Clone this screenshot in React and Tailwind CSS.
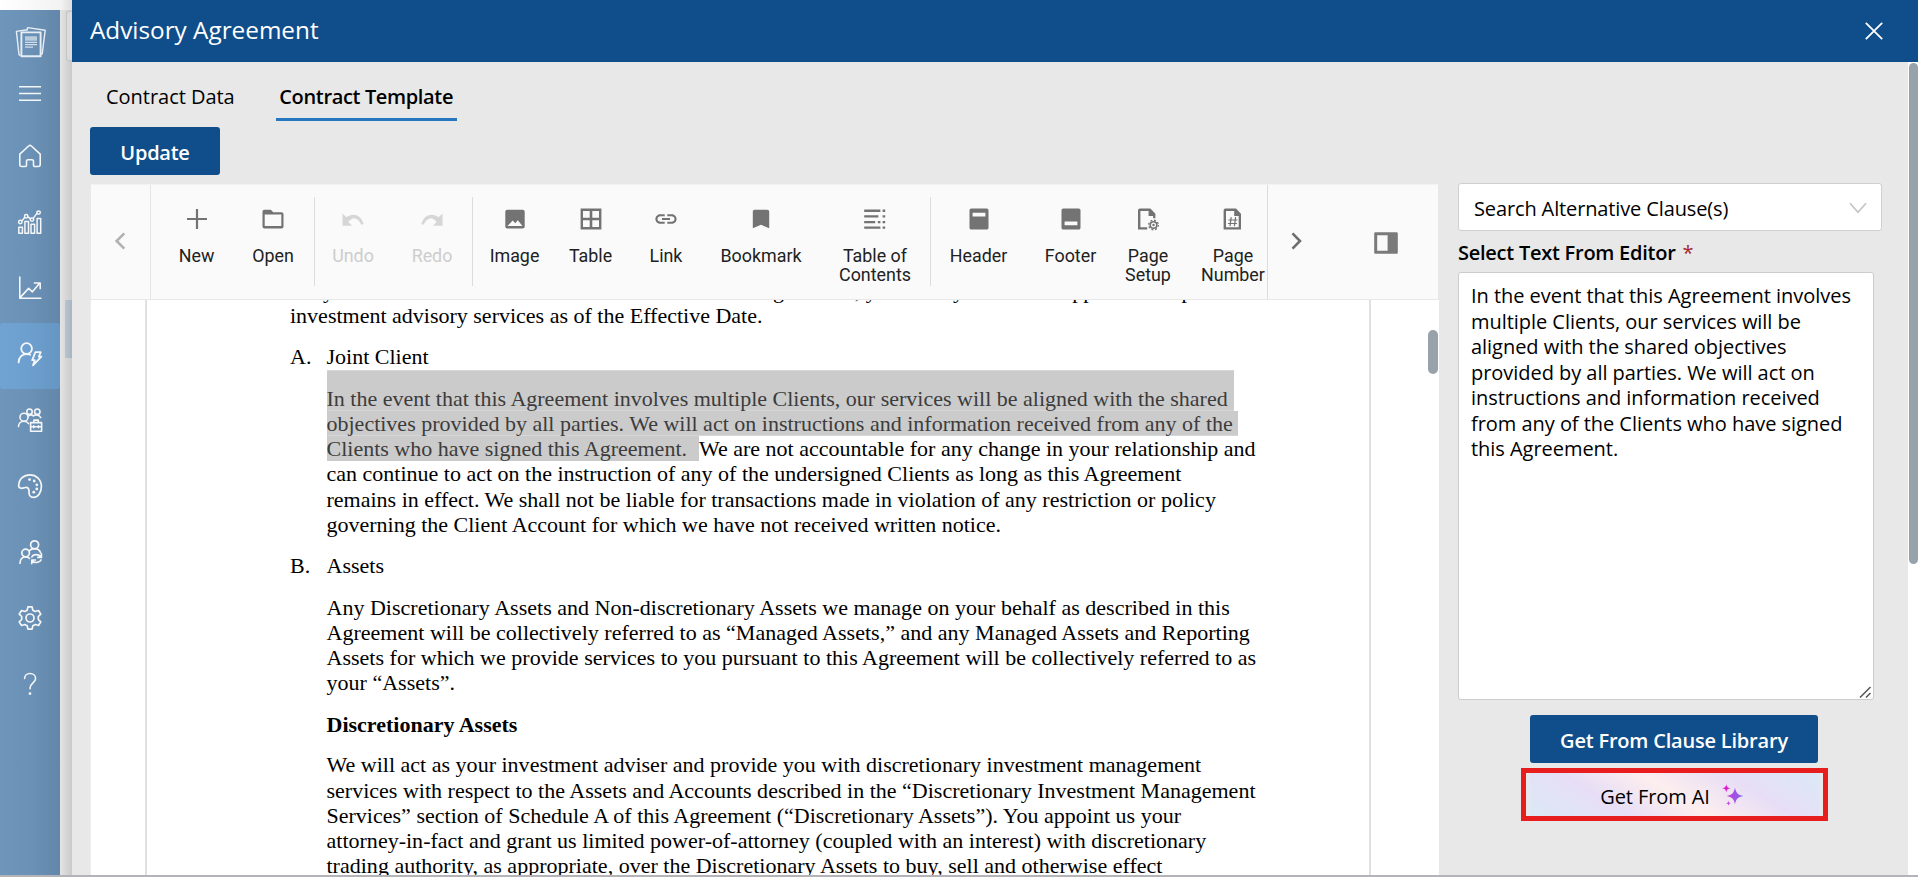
import React from "react";

const NavSvg = ({ children, w = 1.6 }) => (
  <svg width="26" height="26" viewBox="0 0 26 26" fill="none" stroke="#f4f6f8" strokeWidth={w} strokeLinejoin="round" strokeLinecap="round">
    {children}
  </svg>
);

const navItems = [
  {
    name: "home",
    icon: (
      <NavSvg>
        <path d="M2.8 11.2 11.6 3c.8-.7 2-.7 2.8 0l8.800 8.200v10.300a2 2 0 0 1-2 2h-3.400a1.300 1.300 0 0 1-1.300-1.300v-4a1.500 1.500 0 0 0-1.500-1.500h-4a1.500 1.500 0 0 0-1.500 1.500v4a1.300 1.300 0 0 1-1.300 1.300H4.800a2 2 0 0 1-2-2z" />
      </NavSvg>
    ),
  },
  {
    name: "analytics",
    icon: (
      <NavSvg w={1.5}>
        <path d="M1.8 18.200h3.600v6H1.800zM7.900 12.400h3.600v11.800H7.900zM14 15.200h3.600v9H14zM20.100 9.600h3.600v14.600h-3.600zM5 11.800l2.500-3M11 7.800l2.200 1.800M16.400 9.100l3.500-4.700" />
        <circle cx="3.300" cy="13" r="1.700" /><circle cx="9.200" cy="7.200" r="1.700" /><circle cx="15" cy="10.600" r="1.700" /><circle cx="21.600" cy="3.600" r="1.700" />
      </NavSvg>
    ),
  },
  {
    name: "trend",
    icon: (
      <NavSvg>
        <path d="M2.800 2v21.300h21M4 21.600l7.600-8.200 3.800 3.400 7-8.400M17.400 8h5.800v5.600" />
      </NavSvg>
    ),
  },
  {
    name: "users",
    active: true,
    icon: (
      <NavSvg w={1.8}>
        <circle cx="9.600" cy="7.600" r="5.400" />
        <path d="M1.600 21.400c0-4.700 3.300-8.400 8-8.400 1.400 0 2.500.2 3.600.8" />
        <path d="M18.400 11.200h5.400l-2 4.400h2.600l-8.400 8.800 1.800-5.200h-2.600z" />
      </NavSvg>
    ),
  },
  {
    name: "organization",
    icon: (
      <NavSvg w={1.6}>
        <circle cx="12.500" cy="4.700" r="2.700" /><circle cx="20.300" cy="4.700" r="2.700" /><circle cx="7" cy="10.200" r="4" />
        <path d="M1.500 19.600c0-3.200 2.300-5.400 5.500-5.400 2 0 3.600.9 4.600 2.400M11.500 9c1.600-1.400 3.500-1.400 4.900 0 1.900-1.600 5.700-1.600 7.400 1.600" />
        <path d="M13.600 15.600h11v8.600h-11zM16.900 15.400v-2.300h4.400v2.300M13.600 19.800h11M16.800 18.800v2M21.500 18.800v2" />
      </NavSvg>
    ),
  },
  {
    name: "palette",
    icon: (
      <NavSvg w={1.7}>
        <path d="M1.800 12.600C1.800 6 6.800 1.800 13 1.800S24.400 6.600 24.400 13.200 20.800 24.400 16.700 24.400s-4.900-2.900-4.700-5.600c.2-3-1-4.700-3.700-4.300-1.300.2-2.200.8-3.500.8-1.800 0-3.200-.9-3.200-2.700z" />
        <g fill="#f4f6f8" stroke="none"><circle cx="12.600" cy="6.600" r="1.400" /><circle cx="17.200" cy="8" r="1.400" /><circle cx="19.800" cy="11.800" r="1.400" /><circle cx="19.800" cy="16" r="1.400" /><circle cx="16.800" cy="19.200" r="1.400" /></g>
      </NavSvg>
    ),
  },
  {
    name: "client-sync",
    icon: (
      <NavSvg w={1.7}>
        <circle cx="17.600" cy="5.800" r="4" /><circle cx="8.600" cy="14" r="3.800" />
        <path d="M3 24.200c0-3.800 2.300-6.400 5.600-6.400 1.500 0 2.900.5 3.900 1.500M12.400 11.600c1.300-1.300 3.100-1.900 5.200-1.900 2.900 0 5 1.500 6 4" />
        <path d="M14.800 17.800c1.200-2.500 6.400-3.200 8.800-.4M24.400 14.800v3.600h-3.600M24 21c-1.200 2.700-6.400 3.600-8.800.6M14.800 24.600V21h3.600" />
      </NavSvg>
    ),
  },
  {
    name: "settings",
    icon: (
      <NavSvg w={1.7}>
        <circle cx="13" cy="13" r="4" />
        <path d="M10.900 1.900h4.200l.7 3.300 2.400 1.300 3.300-1 2.300 3.600-2.500 2.400v3l2.500 2.400-2.300 3.600-3.300-1-2.400 1.300-.7 3.300h-4.200l-.7-3.300-2.400-1.300-3.300 1-2.300-3.600 2.500-2.400v-3L2.200 9.100l2.300-3.600 3.300 1 2.400-1.300z" />
      </NavSvg>
    ),
  },
  {
    name: "help",
    icon: (
      <NavSvg w={1.600}>
        <path d="M7.600 7.500C7.600 4.500 10 2.500 13 2.500s5.600 2 5.600 5c0 4-5.500 4.700-5.500 9.300v1" />
        <circle cx="13" cy="22.600" r=".6" fill="#f4f6f8" />
      </NavSvg>
    ),
  },
];

function Sidebar() {
  return (
    <nav className="mt-[10px] flex w-[60px] shrink-0 flex-col items-center bg-linear-to-r from-[#6e95ba] via-[#6b91b6] to-[#6287aa]">
      <div className="flex h-[66px] items-center justify-center pl-[2px]">
        <svg width="32" height="34" viewBox="0 0 32 34" fill="none" stroke="#e6edf4" strokeWidth="1.400" strokeLinejoin="round">
          <path d="M5.600 29.600 4 28.600 1.400 5.400l10.800-1.600M11.800 4.800 12.600 1.600l17.600 2.600-3 23.600-2 .4" />
          <path d="M6.400 6.400h19.200v23.800H6.400z" strokeWidth="1.900" />
          <path d="M10 11.400h12M10 13.700h12" strokeWidth="2.300" stroke="#b9cddf" />
          <path d="M10 16.400h12M10 18.700h12M10 21.200h8" strokeWidth="1.200" stroke="#d2deea" />
        </svg>
      </div>
      <div className="flex h-[35px] items-center">
        <svg width="22" height="17" viewBox="0 0 22 17" fill="#f4f6f8">
          <path d="M0 1h22v1.500H0zM0 7.800h22v1.500H0zM0 14.500h22V16H0z" />
        </svg>
      </div>
      <div className="mt-[14px] flex w-full flex-col">
        {navItems.map((n) => (
          <div
            key={n.name}
            className={
              n.active
                ? "flex h-[66px] items-center justify-center rounded-[3px] bg-linear-to-r from-[#70a3d3] via-[#6d9fce] to-[#6696c2] pb-[4px]"
                : "flex h-[66px] items-center justify-center pb-[4px]"
            }
          >
            {n.icon}
          </div>
        ))}
      </div>
    </nav>
  );
}

const Ico = ({ children, dim }) => (
  <svg width="24" height="24" viewBox="0 0 24 24" fill={dim ? "#d6d6d6" : "#737373"} fillRule="evenodd" className="shrink-0">
    {children}
  </svg>
);

const pageOutline = "M4.500 1.500h10.500l5 5.200v15.800H2.600V3.400c0-1 .8-1.900 1.900-1.900zM5 4v16.200h12.700V9h-4.500V4z";

const tools = [
  { cell: "w-[77px]", label: "New", icon: <Ico><path d="M10.900 2h2.200v8.900H22v2.200h-8.900V22h-2.200v-8.900H2v-2.200h8.900z" /></Ico> },
  { cell: "w-[79px] pr-[3px]", label: "Open", icon: <Ico><path d="M3.400 2.700h6.400l2.500 2.500h8.200c1.200 0 2 .9 2 2v12.200c0 1.100-.8 2-2 2h-17c-1.200 0-2-.9-2-2V4.700c0-1.100.8-2 1.900-2zM3.700 7.500v11.600h16.600V7.500z" /></Ico> },
  { sep: true },
  { cell: "w-[78px]", label: "Undo", dim: true, icon: <Ico dim><path d="M12.500 7.200c-2.700 0-5.100 1-7 2.600L1.500 6v12.200h9.600l-3.800-3.800c1.400-1.200 3.200-3.700 5.200-3.700 3.600 0 6.700 3.200 7.700 6.600l2.400-.8C21 10.800 17.300 7.200 12.500 7.200z" transform="translate(0 .5)" /></Ico> },
  { cell: "w-[80px]", label: "Redo", dim: true, icon: <Ico dim><path d="M11.500 7.200c2.700 0 5.100 1 7 2.600L22.500 6v12.200h-9.600l3.800-3.800c-1.400-1.200-3.200-3.700-5.200-3.700-3.600 0-6.700 3.200-7.700 6.600l-2.400-.8C3 10.800 6.700 7.200 11.500 7.200z" transform="translate(0 .5)" /></Ico> },
  { sep: true },
  { cell: "w-[85px]", label: "Image", icon: <Ico><path d="M4.300 2.700h15.400c1.100 0 2 .9 2 2v14.800c0 1.100-.9 2-2 2H4.300c-1.100 0-2-.9-2-2V4.700c0-1.100.9-2 2-2zM4.500 19h15l-4.700-5.800-2.500 3-2.600-2.700z" /></Ico> },
  { cell: "w-[67px]", label: "Table", icon: <Ico><path d="M1.600 1.400h20.800v21.200H1.600zM4 3.900v6.800h6.700V3.900zM13.300 3.900v6.800H20V3.900zM4 13.300v6.800h6.700v-6.800zM13.300 13.300v6.800H20v-6.800z" /></Ico> },
  { cell: "w-[84px]", label: "Link", icon: <Ico><path d="M3.500 12c0-1.700 1.400-2.700 3-2.700h4.200V7.200H6.500C3.700 7.200 1.400 9.300 1.400 12s2.300 4.800 5.100 4.800h4.200v-2.100H6.500c-1.600 0-3-1-3-2.700zM8 13h8v-2.100H8zM17.500 7.200h-4.200v2.100h4.200c1.600 0 3 1 3 2.700s-1.400 2.700-3 2.700h-4.200v2.100h4.200c2.800 0 5.100-2.100 5.100-4.800s-2.300-4.800-5.100-4.800z" /></Ico> },
  { cell: "w-[106px]", label: "Bookmark", icon: <Ico><path d="M5.800 2.800h12.400c1.100 0 2 .8 2 1.800v16.600L12 17.700l-8.200 3.500V4.600c0-1 .9-1.800 2-1.800z" /></Ico> },
  { cell: "w-[116px] pl-[6px]", label: "Table of\nContents", icon: <Ico><path d="M1.200 2.600h16.200v2.300H1.200zM1.200 8.300h14.200v2.300H1.200zM1.200 14h11v2.300h-11zM1.200 19.400h16.200v2.300H1.200zM19.600 2.600h2.600v2.300h-2.600zM19.600 8.300h2.600v2.300h-2.600zM14.800 14h2.600v2.300h-2.600zM19.600 14h2.600v2.300h-2.600zM19.600 19.400h2.600v2.300h-2.600z" /></Ico> },
  { sep: true },
  { cell: "w-[95px] pl-[2px]", label: "Header", icon: <Ico><path d="M4.300 1.400h15.400c1 0 1.800.8 1.800 1.800v17.600c0 1-.8 1.800-1.800 1.800H4.300c-1 0-1.800-.8-1.800-1.800V3.200c0-1 .8-1.800 1.800-1.800zM5.600 5.700v3.700h12.800V5.700z" /></Ico> },
  { cell: "w-[91px]", label: "Footer", icon: <Ico><path d="M4.300 1.400h15.400c1 0 1.800.8 1.800 1.800v17.600c0 1-.8 1.800-1.800 1.800H4.300c-1 0-1.800-.8-1.800-1.800V3.200c0-1 .8-1.800 1.800-1.800zM5.600 14.600v3.700h12.800v-3.700z" /></Ico> },
  {
    cell: "w-[64px]",
    label: "Page\nSetup",
    icon: (
      <Ico>
        <path d="M3.900 1.500h10.500l5 5.200v4.600h-2.300V9h-4.500V4H4.400v16.300h6.800v2.200H2V3.400c0-1 .8-1.900 1.900-1.900z" />
        <circle cx="17.500" cy="18" r="3.300" fill="none" stroke="#737373" strokeWidth="1.600" />
        <circle cx="17.500" cy="18" r="1.200" />
        <circle cx="17.500" cy="18" r="4.800" fill="none" stroke="#737373" strokeWidth="1.300" strokeDasharray="1.900 1.870" />
      </Ico>
    ),
  },
  {
    cell: "w-[88px] pl-[18px]",
    label: "Page\nNumber",
    icon: (
      <Ico>
        <path d={pageOutline} />
        <path d="M10.200 10.200 9 19.200M14.600 10.200l-1.200 9M7.400 13h9M7 16.500h9" fill="none" stroke="#737373" strokeWidth="1.200" />
      </Ico>
    ),
  },
];

function Toolbar() {
  return (
    <div className="flex h-[116px] shrink-0 border border-[#e8e8e8] border-t-[#f2f2f2] bg-[#fafafa]">
      <div className="flex w-[60px] items-center justify-center border-r border-[#e5e5e5]">
        <svg width="12" height="18" viewBox="0 0 12 18" fill="none" stroke="#b2b2b2" strokeWidth="2.600" className="mr-px mb-[2px]"><path d="M10.300 1.300 2.600 9l7.700 7.700" /></svg>
      </div>
      <div className="flex w-[1116px] shrink-0 pl-[7px] font-[Roboto,sans-serif] text-[17.875px] leading-[19px]">
        {tools.map((t, i) =>
          t.sep ? (
            <div key={i} className="mx-[-0.5px] mt-[12px] h-[89px] w-px shrink-0 bg-[#dcdcdc]" />
          ) : (
            <div key={i} className={`${t.cell} flex shrink-0 flex-col items-center pt-[21.500px]`}>
              {t.icon}
              <div className={t.dim ? "mt-[15.500px] text-center whitespace-pre text-[#cdcdcd]" : "mt-[15.500px] text-center whitespace-pre text-[#212121]"}>{t.label}</div>
            </div>
          )
        )}
      </div>
      <div className="flex flex-1 items-center border-l border-[#dcdcdc]">
        <svg width="12" height="18" viewBox="0 0 12 18" fill="none" stroke="#6e6e6e" strokeWidth="2.600" className="mb-[2px] ml-[23px]"><path d="M1.500 1.300 9 9l-7.500 7.700" /></svg>
        <svg width="24" height="22" viewBox="0 0 24 22" fill="#7a7a7a" fillRule="evenodd" className="mt-[2px] ml-[71px]"><path d="M1.500.3h21c.8 0 1.300.6 1.300 1.300v18.800c0 .7-.5 1.300-1.300 1.300h-21C.7 21.700.2 21.100.2 20.400V1.600C.2.900.7.300 1.500.3zM3.200 3.300v15.400h10.400V3.300z" /></svg>
      </div>
    </div>
  );
}

const Item = ({ mark, children }) => (
  <div className="flex pt-[16px]">
    <span className="w-[36.500px]">{mark}</span>
    <span>{children}</span>
  </div>
);

const Lines = ({ rows }) => rows.map((r) => <div key={r}>{r}</div>);

function Document() {
  return (
    <div className="flex flex-1 overflow-hidden border-l border-[#ededed] bg-white">
      <div className="w-[54px] shrink-0" />
      <div className="w-[1226px] shrink-0 border-x-2 border-[#e0e0e0] pl-[143px] font-['Liberation_Serif',serif] text-[22px] leading-[25.3px] whitespace-nowrap text-black">
        <div className="mt-[-22.400px] flex">
          <span className="w-[467px]">Duly noted with the terms and conditions stated in this</span>
          <span>Agreement, you hereby retain and appoint us to provide</span>
        </div>
        <div>investment advisory services as of the Effective Date.</div>
        <Item mark="A.">Joint Client</Item>
        <div className="pl-[36.500px]">
          <div className="w-[907.500px] border-y border-[#d6d6d6] bg-[#cbcbcb] pt-[15px] text-[#3c3c3c]">
            <div className="h-[24.300px]">In the event that this Agreement involves multiple Clients, our services will be aligned with the shared</div>
          </div>
          <div className="h-[25.300px] w-[911.500px] border-b border-[#d6d6d6] bg-[#cbcbcb] text-[#3c3c3c]">objectives provided by all parties. We will act on instructions and information received from any of the</div>
          <div className="flex">
            <span className="w-[372.500px] bg-[#cbcbcb] text-[#3c3c3c]">Clients who have signed this Agreement.</span>
            <span>We are not accountable for any change in your relationship and</span>
          </div>
          <Lines
            rows={[
              "can continue to act on the instruction of any of the undersigned Clients as long as this Agreement",
              "remains in effect. We shall not be liable for transactions made in violation of any restriction or policy",
              "governing the Client Account for which we have not received written notice.",
            ]}
          />
        </div>
        <Item mark="B.">Assets</Item>
        <div className="pt-[16px] pl-[36.500px]">
          <div className="tracking-[0.015px]">
            <Lines
              rows={[
                "Any Discretionary Assets and Non-discretionary Assets we manage on your behalf as described in this",
                "Agreement will be collectively referred to as “Managed Assets,” and any Managed Assets and Reporting",
                "Assets for which we provide services to you pursuant to this Agreement will be collectively referred to as",
                "your “Assets”.",
              ]}
            />
          </div>
          <div className="pt-[16.500px] font-bold">Discretionary Assets</div>
          <div className="pt-[14.700px] tracking-[0.010px]">
            <Lines
              rows={[
                "We will act as your investment adviser and provide you with discretionary investment management",
                "services with respect to the Assets and Accounts described in the “Discretionary Investment Management",
                "Services” section of Schedule A of this Agreement (“Discretionary Assets”). You appoint us your",
                "attorney-in-fact and grant us limited power-of-attorney (coupled with an interest) with discretionary",
                "trading authority, as appropriate, over the Discretionary Assets to buy, sell and otherwise effect",
              ]}
            />
          </div>
        </div>
      </div>
      <div className="ml-auto w-[11px] pt-[30px]">
        <div className="h-[44px] w-[10px] rounded-full bg-[#98a2ab]" />
      </div>
    </div>
  );
}

function ClausePanel() {
  return (
    <aside className="mt-[-1px] ml-[19px] w-[424px] text-[20px] text-black">
      <div className="flex h-[48px] items-center justify-between rounded-[3px] border border-[#cfcfcf] bg-white pt-[3px] pr-[14px] pl-[15px] tracking-[-0.130px]">
        <span>Search Alternative Clause(s)</span>
        <svg width="18" height="12" viewBox="0 0 18 12" fill="none" stroke="#c4c4c4" strokeWidth="1.700" className="mb-[2px]"><path d="M1 1.200 9 10.200l8-9" /></svg>
      </div>
      <div className="mt-[9px] flex h-[26px] items-center gap-[7px] font-semibold tracking-[-0.250px]">
        <span>Select Text From Editor</span>
        <span className="font-normal text-[#a4262c]">*</span>
      </div>
      <div className="mt-[6px] flex h-[428px] w-[416px] flex-col rounded-[3px] border border-[#cccccc] bg-white pt-[10px] pl-[12px] leading-[25.500px] tracking-[-0.040px] whitespace-nowrap">
        <Lines
          rows={[
            "In the event that this Agreement involves",
            "multiple Clients, our services will be",
            "aligned with the shared objectives",
            "provided by all parties. We will act on",
            "instructions and information received",
            "from any of the Clients who have signed",
            "this Agreement.",
          ]}
        />
        <svg width="12" height="12" viewBox="0 0 12 12" stroke="#555" strokeWidth="1.500" className="mt-auto mr-[2px] mb-[1px] self-end"><path d="M1 11.500 11.500 1M7 11.500 11.500 7" /></svg>
      </div>
      <div className="mt-[15px] ml-[72px] flex h-[48px] w-[288px] items-center justify-center rounded-[3px] bg-[#0f4e8a] pt-[4px] font-semibold tracking-[-0.200px] text-white">Get From Clause Library</div>
      <div className="mt-[5px] ml-[63px] flex h-[53px] w-[307px] border-[5px] border-[#e81e1e] bg-[#e8e8e8] px-[4px]">
        <div className="flex flex-1 items-center justify-center gap-[12px] bg-[linear-gradient(32deg,#dbe9f6_0%,#e7def6_28%,#fdeeee_50%,#e7def6_74%,#dbe9f6_100%)] pt-[5px] pr-[5px] tracking-[-0.100px]">
          <span>Get From AI</span>
          <svg width="22" height="22" viewBox="0 0 22 22" className="mb-[5px]">
            <defs>
              <linearGradient id="spark" x1="0" y1="0" x2="1" y2="0"><stop offset="0" stopColor="#c637d8" /><stop offset="1" stopColor="#7a6cf0" /></linearGradient>
            </defs>
            <path d="M13 3.800c1.200 5.300 2.700 7 8.400 8.200-5.700 1.200-7.200 2.900-8.400 8.200-1.200-5.300-2.700-7-8.400-8.200 5.700-1.200 7.200-2.900 8.400-8.200z" fill="url(#spark)" />
            <path d="M4.300.2c.6 2.700 1.300 3.500 4.200 4.100-2.900.6-3.600 1.400-4.200 4.100C3.700 5.700 3 4.900.1 4.300 3 3.700 3.700 2.900 4.300.2z" fill="#e31ccf" />
            <path d="M6.500 16.800c.3 1.600.8 2.100 2.600 2.500-1.800.4-2.300.9-2.600 2.500-.3-1.600-.8-2.100-2.600-2.500 1.800-.4 2.300-.9 2.600-2.500z" fill="#c24be0" />
          </svg>
        </div>
      </div>
    </aside>
  );
}

export default function App() {
  return (
    <div className="flex h-[877px] w-[1918px] flex-col overflow-hidden bg-[#b3b3b8] font-['Open_Sans',sans-serif]">
      <div className="flex h-[875px] bg-linear-to-r from-white to-[#f0f0f0] to-[72px]">
        <Sidebar />
        <div className="flex w-[12px] shrink-0 flex-col items-end bg-linear-to-r from-[#e4e4e4] to-[#cacaca]">
          <div className="h-[10px] w-full bg-linear-to-r from-[#f4f4f4] to-[#dedede]" />
          <div className="mt-px h-[50px] w-[6px] rounded-l-[3px] border border-r-0 border-[#c4c4c4] bg-[#dcdcdc]" />
          <div className="mt-[239px] h-[58px] w-[7px] bg-linear-to-r from-[#b9c4d1] to-[#a9b4c1]" />
        </div>
        <main className="flex flex-1 flex-col bg-[#e8e8e8]">
          <header className="flex h-[62px] shrink-0 items-center justify-between bg-[#0f4e8a] pr-[35px] pb-px pl-[18px] text-white">
            <h1 className="text-[24.300px]">Advisory Agreement</h1>
            <svg width="18" height="18" viewBox="0 0 18 18" fill="none" stroke="#fff" strokeWidth="1.800" className="mt-px"><path d="M.8.8 17.200 17.200M17.200.8.8 17.200" /></svg>
          </header>
          <div className="flex flex-1 overflow-hidden">
            <div className="flex flex-1 flex-col pl-[18px]">
              <div className="flex h-[59px] shrink-0 text-[20px] text-black">
                <div className="ml-[6px] px-[10px] pt-[19.500px] tracking-[-0.030px]">Contract Data</div>
                <div className="ml-[31px] w-[181px] border-b-[3px] border-[#2776c0] pt-[19.500px] text-center font-semibold tracking-[-0.350px]">Contract Template</div>
              </div>
              <button className="mt-[6px] h-[48px] w-[130px] shrink-0 rounded-[3px] bg-[#0f4e8a] pt-[4px] text-[20px] font-semibold tracking-[-0.250px] text-white">Update</button>
              <div className="mt-[9px] flex flex-1">
                <section className="flex h-[691px] w-[1349px] shrink-0 flex-col">
                  <Toolbar />
                  <Document />
                </section>
                <ClausePanel />
              </div>
            </div>
            <div className="w-[10px] shrink-0 bg-white pt-px pl-px">
              <div className="h-[501px] w-[9px] rounded-full bg-[#98a2ab]" />
            </div>
          </div>
        </main>
      </div>
    </div>
  );
}
